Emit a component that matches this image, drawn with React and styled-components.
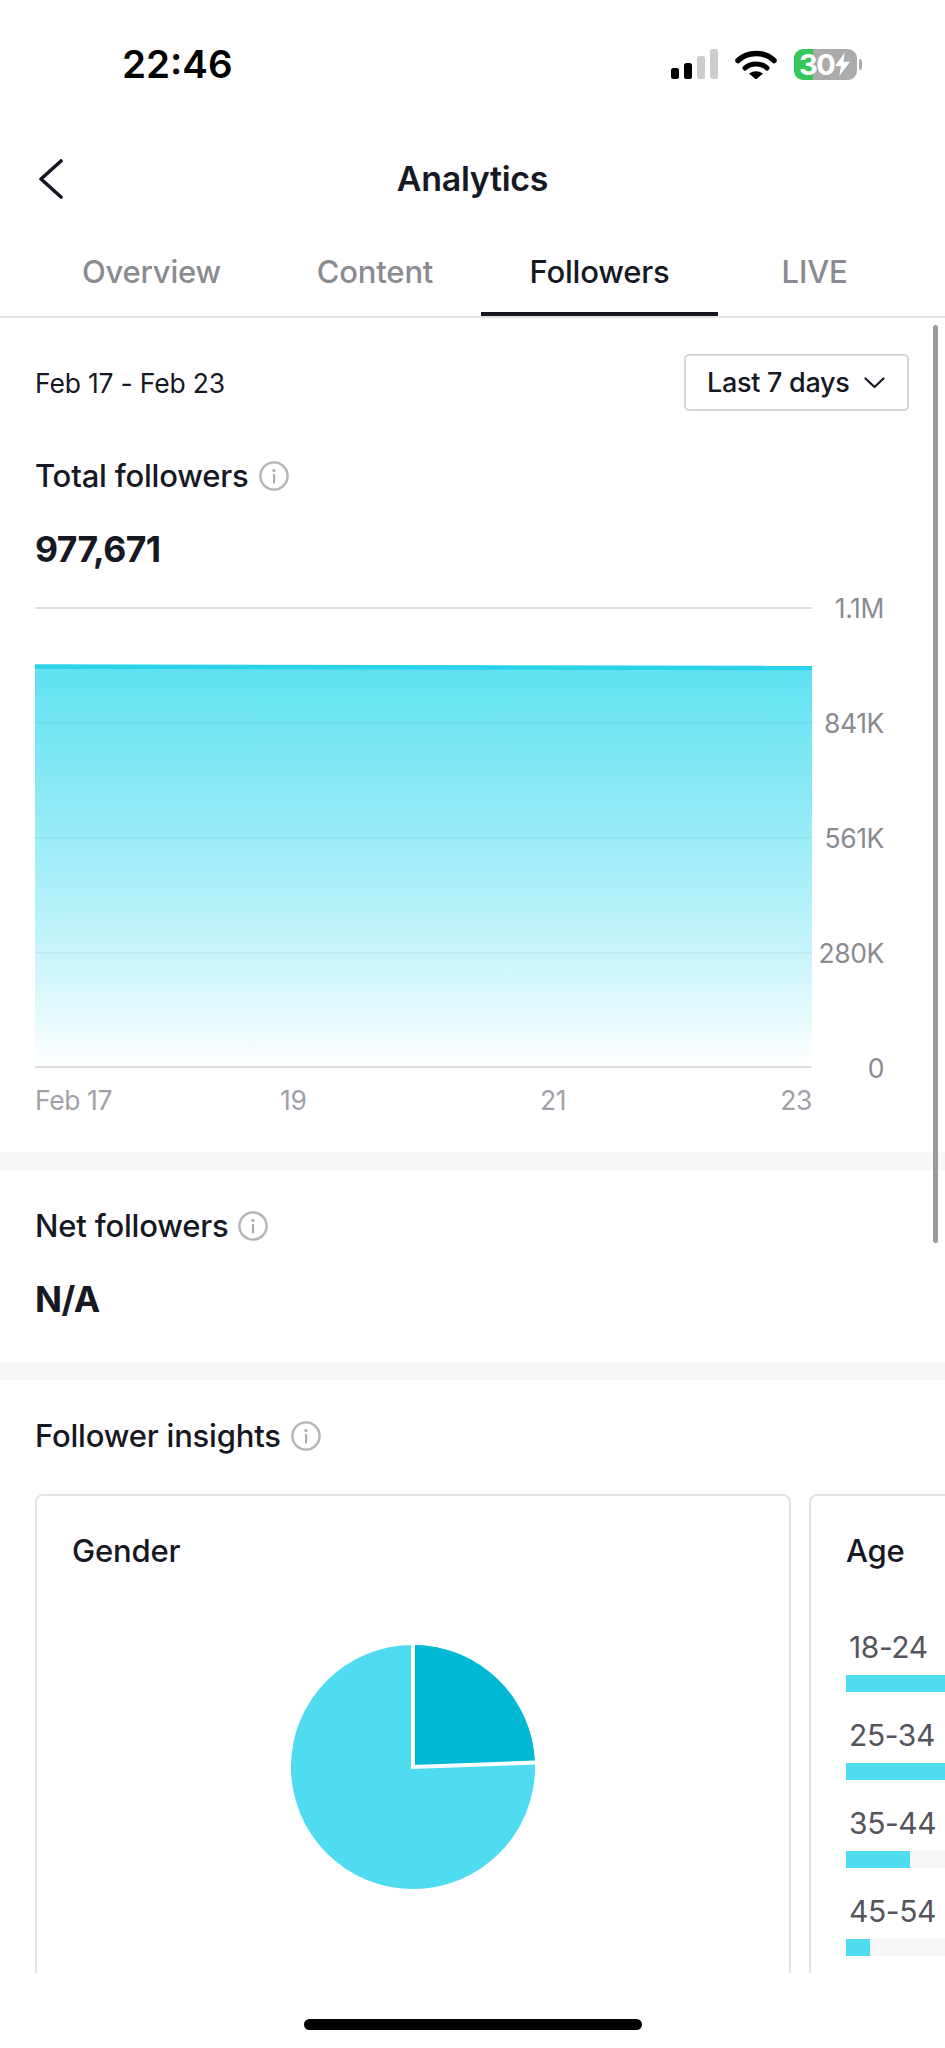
import React from "react";
import styled, { createGlobalStyle } from "styled-components";

const Global = createGlobalStyle`
  html, body { margin: 0; padding: 0; background: #fff; }
  * { box-sizing: border-box; }
`;

const Page = styled.div`
  width: 945px;
  height: 2048px;
  display: flex;
  flex-direction: column;
  overflow: hidden;
  background: #fff;
  color: #161823;
  font-family: Inter, "Open Sans", sans-serif;
`;

const StatusBar = styled.div`
  height: 128px;
  flex: none;
  display: flex;
  align-items: center;
  padding: 0 88px 0 122px;
`;
const Time = styled.div`
  font-family: Inter, "Liberation Sans", sans-serif;
  font-size: 38.5px;
  font-weight: 600;
  line-height: 46px;
  color: #000;
  margin-right: auto;
`;
const StatusIcons = styled.div`
  display: flex;
  align-items: center;
`;
const Battery = styled.div`
  width: 63px;
  height: 31px;
  margin-left: 17px;
  border-radius: 9px;
  background: linear-gradient(90deg, #35c759 0 19px, #ababab 19px);
  display: flex;
  align-items: center;
  padding-left: 5px;
  color: #fff;
  font-family: Inter, "Liberation Sans", sans-serif;
  font-size: 29px;
  font-weight: 700;
  line-height: 31px;
  letter-spacing: -1.4px;
  position: relative;
  &::after {
    content: "";
    position: absolute;
    right: -5px;
    top: 10px;
    width: 3px;
    height: 11px;
    border-radius: 0 4px 4px 0;
    background: #ababab;
  }
`;

const Header = styled.div`
  height: 100px;
  flex: none;
  position: relative;
  display: flex;
  align-items: center;
  justify-content: center;
  padding-top: 2px;
`;
const BackIcon = styled.svg`
  position: absolute;
  left: 38px;
  top: 31px;
`;
const Title = styled.div`
  font-size: 34px;
  font-weight: 600;
  line-height: 40px;
  letter-spacing: -0.3px;
`;

const Tabs = styled.div`
  height: 90px;
  flex: none;
  display: flex;
  padding-left: 34px;
  border-bottom: 2px solid #e3e3e4;
`;
const Tab = styled.div`
  width: ${(p) => p.$w}px;
  height: 88px;
  padding-top: 4px;
  margin-left: ${(p) => (p.$offset ? `${p.$offset}px` : 0)};
  display: flex;
  align-items: center;
  justify-content: center;
  font-size: 31px;
  font-weight: 500;
  line-height: 36px;
  letter-spacing: -0.2px;
  color: ${(p) => (p.$active ? "#161823" : "#8a8b91")};
  border-bottom: 4px solid ${(p) => (p.$active ? "#161823" : "transparent")};
`;

const Content = styled.div`
  height: 1655px;
  flex: none;
  position: relative;
  overflow: hidden;
`;
const Scrollbar = styled.div`
  position: absolute;
  left: 933px;
  top: 7px;
  width: 5px;
  height: 918px;
  border-radius: 3px;
  background: #9a9a9a;
`;

const Section = styled.section`
  padding: ${(p) => p.$top}px 36px ${(p) => p.$bottom}px 35px;
`;
const Band = styled.div`
  height: 18px;
  background: #f6f7f7;
`;
const DateRow = styled.div`
  height: 57px;
  display: flex;
  align-items: center;
  justify-content: space-between;
`;
const DateText = styled.div`
  font-size: 26.5px;
  line-height: 32px;
  letter-spacing: -0.2px;
`;
const RangeButton = styled.div`
  width: 225px;
  height: 57px;
  border: 2px solid #d6d6d8;
  border-radius: 5px;
  display: flex;
  align-items: center;
  gap: 14px;
  padding-left: 21px;
  font-size: 27px;
  font-weight: 500;
  line-height: 32px;
  letter-spacing: -0.3px;
`;
const TitleRow = styled.div`
  height: 38px;
  display: flex;
  align-items: center;
  gap: 10px;
  margin-top: ${(p) => p.$mt || 0}px;
  font-size: 31px;
  font-weight: 500;
  line-height: 38px;
  letter-spacing: -0.2px;
`;
const Stat = styled.div`
  margin-top: 35px;
  font-size: 35.5px;
  font-weight: 700;
  line-height: 40px;
  letter-spacing: -0.6px;
`;
const ChartRow = styled.div`
  margin-top: 37px;
  display: flex;
  align-items: flex-start;
`;
const Plot = styled.svg`
  display: block;
  flex: none;
`;
const Axis = styled.div`
  width: 72px;
  flex: none;
  margin: -14px 0 -14px;
  display: flex;
  flex-direction: column;
  gap: 85px;
`;
const AxisLabel = styled.div`
  height: 30px;
  font-size: 26.5px;
  line-height: 30px;
  letter-spacing: -0.4px;
  text-align: right;
  color: #8a8b91;
`;
const XLabels = styled.div`
  width: 777px;
  margin-top: 16px;
  display: grid;
  grid-template-columns: 245px 260px 1fr auto;
  font-size: 26.5px;
  line-height: 30px;
  letter-spacing: -0.4px;
  color: #a0a1a6;
`;

const CardRow = styled.div`
  margin: 39px 0 0 35px;
  display: flex;
  gap: 18px;
  width: 1600px;
`;
const Card = styled.div`
  width: 756px;
  height: 700px;
  flex: none;
  border: 2px solid #e3e3e4;
  border-radius: 8px;
  padding: 36px 36px 36px 35px;
`;
const CardTitle = styled.div`
  font-size: 31px;
  font-weight: 500;
  line-height: 38px;
  letter-spacing: -0.2px;
`;
const Pie = styled.svg`
  display: block;
  margin: 75px auto 0;
`;
const AgeList = styled.div`
  margin-top: 58px;
  display: flex;
  flex-direction: column;
  gap: 24px;
`;
const AgeRow = styled.div`
  display: flex;
  flex-direction: column;
  gap: 9px;
`;
const AgeLabel = styled.div`
  padding-left: 3px;
  font-size: 30px;
  line-height: 38px;
  letter-spacing: -0.4px;
  color: #54555c;
`;
const Track = styled.div`
  height: 17px;
  background: #f6f6f6;
`;
const Fill = styled.div`
  height: 100%;
  width: ${(p) => p.$w}px;
  background: #4fdcf0;
`;

const HomeArea = styled.div`
  flex: 1;
  padding-top: 46px;
  display: flex;
  justify-content: center;
`;
const HomeBar = styled.div`
  width: 338px;
  height: 11px;
  border-radius: 6px;
  background: #000;
`;

const Info = () => (
  <svg width="30" height="30" viewBox="0 0 30 30" fill="none">
    <circle cx="15" cy="15" r="13.6" stroke="#b4b5b8" strokeWidth="2.4" />
    <circle cx="15" cy="9.5" r="1.6" fill="#a8a9ad" />
    <rect x="14" y="13" width="2.1" height="9.5" rx="1" fill="#a8a9ad" />
  </svg>
);

const tabs = [
  ["Overview", 235],
  ["Content", 212],
  ["Followers", 237, true],
  ["LIVE", 161, false, 16],
];
const yTicks = ["1.1M", "841K", "561K", "280K", "0"];
const ages = [
  ["18-24", 300],
  ["25-34", 300],
  ["35-44", 64],
  ["45-54", 24],
];

export default function App() {
  return (
    <Page>
      <Global />
      <StatusBar>
        <Time>22:46</Time>
        <StatusIcons>
          <svg width="47" height="30" viewBox="0 0 47 30">
            <rect x="0" y="19" width="8" height="11" rx="2.5" fill="#000" />
            <rect x="13" y="14" width="8" height="16" rx="2.5" fill="#000" />
            <rect x="26" y="7" width="8" height="23" rx="2.5" fill="#cdcdcd" />
            <rect x="39" y="0" width="8" height="30" rx="2.5" fill="#cdcdcd" />
          </svg>
          <svg width="42" height="30" viewBox="0 0 42 30" fill="none" style={{ marginLeft: 17 }}>
            <path d="M3 11.5C12.5 2 29.5 2 39 11.5" stroke="#000" strokeWidth="5.5" strokeLinecap="round" />
            <path d="M10 19C15.5 13.5 26.5 13.5 32 19" stroke="#000" strokeWidth="5" strokeLinecap="round" />
            <path d="M14 24.5Q21 20 28 24.5L21 30.5Z" fill="#000" />
          </svg>
          <Battery>
            30
            <svg width="15" height="25" viewBox="0 0 14 22" style={{ marginLeft: 1 }}>
              <path d="M9 0L0 12.5H5.5L4 22L14 8.5H8Z" fill="#fff" />
            </svg>
          </Battery>
        </StatusIcons>
      </StatusBar>

      <Header>
        <BackIcon width="26" height="40" viewBox="0 0 26 40" fill="none">
          <path d="M23 2L3 20L23 38" stroke="#161823" strokeWidth="3.6" strokeLinecap="round" strokeLinejoin="round" />
        </BackIcon>
        <Title>Analytics</Title>
      </Header>

      <Tabs>
        {tabs.map(([label, w, active, offset]) => (
          <Tab key={label} $w={w} $active={active} $offset={offset}>
            {label}
          </Tab>
        ))}
      </Tabs>

      <Content>
        <Section $top={36} $bottom={37}>
          <DateRow>
            <DateText>Feb 17 - Feb 23</DateText>
            <RangeButton>
              Last 7 days
              <svg width="21" height="12" viewBox="0 0 21 12" fill="none">
                <path d="M1.5 1.5L10.5 10L19.5 1.5" stroke="#161823" strokeWidth="2.2" strokeLinecap="round" strokeLinejoin="round" />
              </svg>
            </RangeButton>
          </DateRow>
          <TitleRow $mt={46}>
            Total followers <Info />
          </TitleRow>
          <Stat>977,671</Stat>
          <ChartRow>
            <Plot width="777" height="462" viewBox="0 0 777 462">
              <defs>
                <linearGradient id="area" x1="0" y1="0" x2="0" y2="1">
                  <stop offset="0" stopColor="#5ee1f1" />
                  <stop offset="0.5" stopColor="#a4eef8" />
                  <stop offset="0.8" stopColor="#d6f7fb" />
                  <stop offset="1" stopColor="#ffffff" />
                </linearGradient>
              </defs>
              <rect x="0" y="0" width="777" height="2" fill="#dfdfe0" />
              <path d="M0 58L777 60V459H0Z" fill="url(#area)" />
              <path d="M0 59.5L777 61" stroke="#2ad3e8" strokeWidth="4.5" />
              <rect x="0" y="115" width="777" height="1.5" fill="#161823" fillOpacity="0.05" />
              <rect x="0" y="230" width="777" height="1.5" fill="#161823" fillOpacity="0.05" />
              <rect x="0" y="345" width="777" height="1.5" fill="#161823" fillOpacity="0.05" />
              <rect x="0" y="459" width="777" height="2" fill="#dfdfe0" />
            </Plot>
            <Axis>
              {yTicks.map((t) => (
                <AxisLabel key={t}>{t}</AxisLabel>
              ))}
            </Axis>
          </ChartRow>
          <XLabels>
            <span>Feb 17</span>
            <span>19</span>
            <span>21</span>
            <span>23</span>
          </XLabels>
        </Section>
        <Band />
        <Section $top={37} $bottom={42}>
          <TitleRow>
            Net followers <Info />
          </TitleRow>
          <Stat>N/A</Stat>
        </Section>
        <Band />
        <Section $top={37} $bottom={0}>
          <TitleRow>
            Follower insights <Info />
          </TitleRow>
        </Section>
        <CardRow>
          <Card>
            <CardTitle>Gender</CardTitle>
            <Pie width="244" height="244" viewBox="0 0 244 244">
              <circle cx="122" cy="122" r="122" fill="#4fdcf0" />
              <path d="M122 0A122 122 0 0 1 243.9 117.5L122 122Z" fill="#02b9d5" />
              <path d="M122 0V122L244 117.5" fill="none" stroke="#fff" strokeWidth="4" />
            </Pie>
          </Card>
          <Card>
            <CardTitle>Age</CardTitle>
            <AgeList>
              {ages.map(([label, w]) => (
                <AgeRow key={label}>
                  <AgeLabel>{label}</AgeLabel>
                  <Track>
                    <Fill $w={w} />
                  </Track>
                </AgeRow>
              ))}
            </AgeList>
          </Card>
        </CardRow>
        <Scrollbar />
      </Content>

      <HomeArea>
        <HomeBar />
      </HomeArea>
    </Page>
  );
}
